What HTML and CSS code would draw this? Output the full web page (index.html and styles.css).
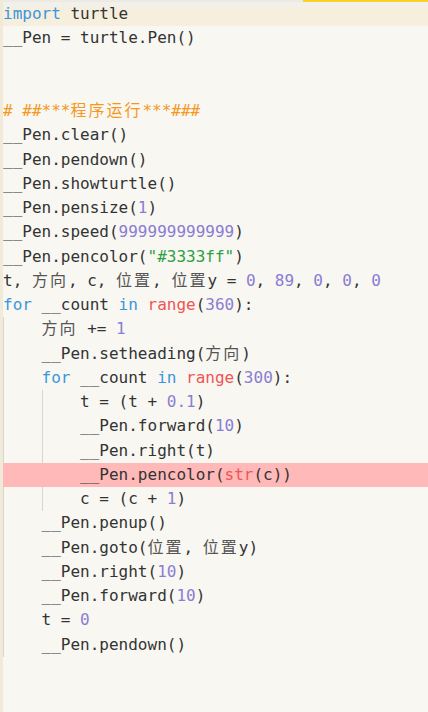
FILE: index.html
```html
<!DOCTYPE html>
<html>
<head>
<meta charset="utf-8">
<link rel="stylesheet" href="styles.css">
</head>
<body>
<div class="editor">
  <div class="topstrip"><div class="tab-mark"></div></div>
  <div class="code">
    <div class="ln cur"><span class="kw">import</span> turtle</div>
    <div class="ln">__Pen = turtle.Pen()</div>
    <div class="ln"></div>
    <div class="ln"></div>
    <div class="ln"><span class="cm"># ##***<span class="cjk">程序运行</span>***###</span></div>
    <div class="ln">__Pen.clear()</div>
    <div class="ln">__Pen.pendown()</div>
    <div class="ln">__Pen.showturtle()</div>
    <div class="ln">__Pen.pensize(<span class="num">1</span>)</div>
    <div class="ln">__Pen.speed(<span class="num">999999999999</span>)</div>
    <div class="ln">__Pen.pencolor(<span class="str">"#3333ff"</span>)</div>
    <div class="ln">t, <span class="cjk">方向</span>, c, <span class="cjk">位置</span>, <span class="cjk">位置</span>y = <span class="num">0</span>, <span class="num">89</span>, <span class="num">0</span>, <span class="num">0</span>, <span class="num">0</span></div>
    <div class="ln"><span class="kw">for</span> __count <span class="kw">in</span> <span class="bi">range</span>(<span class="num">360</span>):</div>
    <div class="ln"><span class="ind"></span><span class="cjk">方向</span> += <span class="num">1</span></div>
    <div class="ln"><span class="ind"></span>__Pen.setheading(<span class="cjk">方向</span>)</div>
    <div class="ln"><span class="ind"></span><span class="kw">for</span> __count <span class="kw">in</span> <span class="bi">range</span>(<span class="num">300</span>):</div>
    <div class="ln"><span class="ind"></span><span class="ind"></span>t = (t + <span class="num">0.1</span>)</div>
    <div class="ln"><span class="ind"></span><span class="ind"></span>__Pen.forward(<span class="num">10</span>)</div>
    <div class="ln"><span class="ind"></span><span class="ind"></span>__Pen.right(t)</div>
    <div class="ln hl"><span class="ind"></span><span class="ind"></span>__Pen.pencolor(<span class="bi">str</span>(c))</div>
    <div class="ln"><span class="ind"></span><span class="ind"></span>c = (c + <span class="num">1</span>)</div>
    <div class="ln"><span class="ind"></span>__Pen.penup()</div>
    <div class="ln"><span class="ind"></span>__Pen.goto(<span class="cjk">位置</span>, <span class="cjk">位置</span>y)</div>
    <div class="ln"><span class="ind"></span>__Pen.right(<span class="num">10</span>)</div>
    <div class="ln"><span class="ind"></span>__Pen.forward(<span class="num">10</span>)</div>
    <div class="ln"><span class="ind"></span>t = <span class="num">0</span></div>
    <div class="ln"><span class="ind"></span>__Pen.pendown()</div>
  </div>
</div>
</body>
</html>
```
FILE: styles.css
```css
html, body {
  margin: 0;
  padding: 0;
  background: #f8f7f2;
}
.editor {
  position: relative;
  width: 428px;
  height: 712px;
  box-sizing: border-box;
  border-left: 3px solid #f2ead8;
  background: #f8f7f2;
  overflow: hidden;
}
.topstrip {
  position: absolute;
  top: 0;
  left: -3px;
  right: 0;
  height: 7px;
  background: #f2f0eb;
  border-top: 2px solid #edeae3;
  box-sizing: border-box;
  z-index: 2;
}
.tab-mark {
  position: absolute;
  top: -2px;
  left: 303px;
  right: 0;
  height: 2px;
  background: #fbd027;
}
.code {
  padding-top: 2px;
  font-family: "DejaVu Sans Mono", "Noto Sans CJK SC", monospace;
  font-size: 16px;
  color: #333333;
}
.ln {
  height: 24.25px;
  line-height: 24.25px;
  white-space: pre;
}
.cur {
  background: #f7efdd;
}
.hl {
  background: #ffb9b9;
}
.ind {
  display: inline-block;
  width: 4ch;
  height: 24.25px;
  vertical-align: top;
  box-sizing: border-box;
  border-left: 1px solid #d8d6d0;
}
.hl .ind {
  border-left-color: transparent;
}
.kw { color: #3a96dc; }
.bi { color: #f05454; }
.num { color: #8a7dd3; }
.str { color: #2ea044; }
.cm { color: #f5981f; }
.cjk {
  font-family: "Noto Sans CJK SC", sans-serif;
  letter-spacing: 2px;
  line-height: 1;
  color: #555555;
}
.cm .cjk { color: #f5981f; }
```
